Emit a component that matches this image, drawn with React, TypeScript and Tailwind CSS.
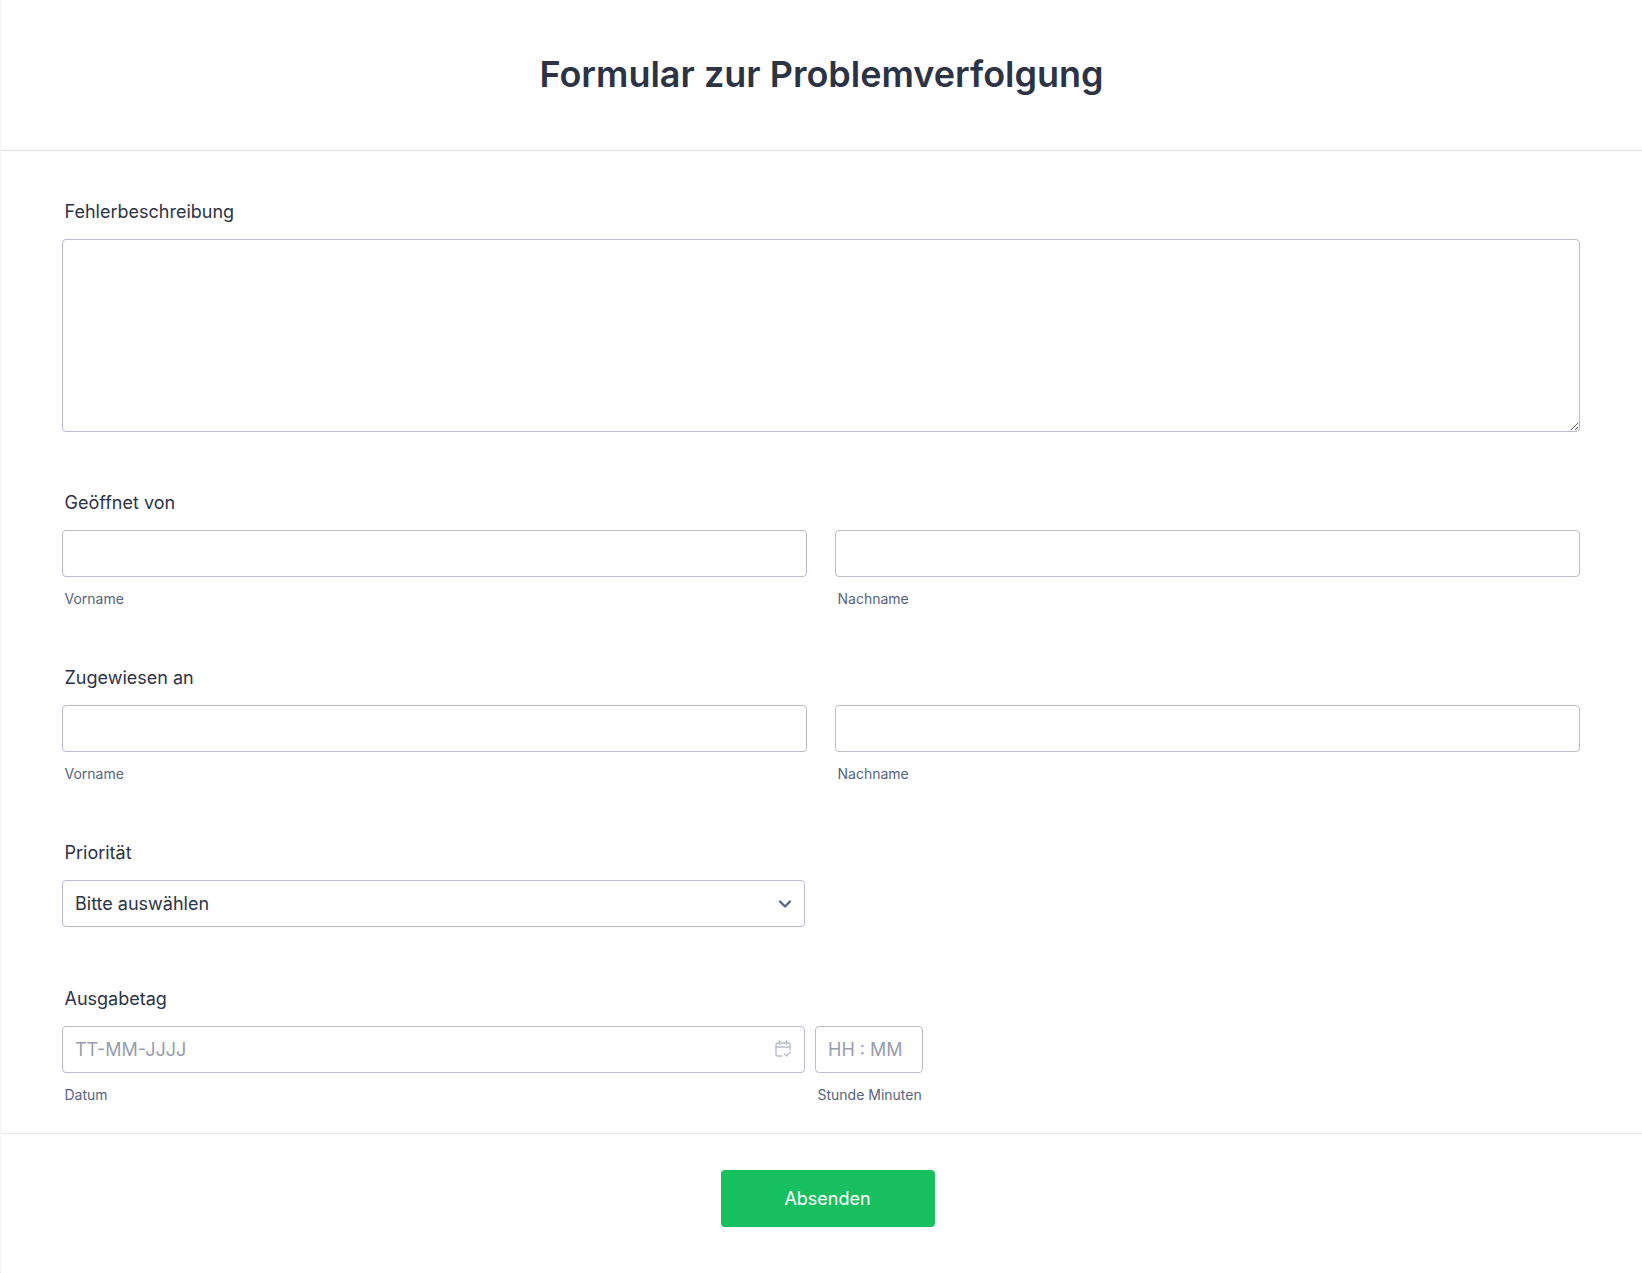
// Issue tracking form
import { ChevronDown } from 'lucide-react';

const inputClass =
  'block h-[47px] w-full rounded border border-[#b8bdc9] bg-white px-3 text-lg text-[#2c3345] outline-none placeholder:text-[#979dad]';

function FieldLabel({ children }: { children: string }) {
  return <label className="mb-[15px] block h-[24px] pl-[2.5px] text-lg leading-[24px] text-[#2c3345]">{children}</label>;
}

function SubLabel({ children }: { children: string }) {
  return <span className="mt-[13px] block pl-[2.5px] text-sm leading-[18px] text-[#57647e]">{children}</span>;
}

function NameField({ label }: { label: string }) {
  return (
    <div>
      <FieldLabel>{label}</FieldLabel>
      <div className="grid grid-cols-2 gap-[28px]">
        <div>
          <input className={inputClass} />
          <SubLabel>Vorname</SubLabel>
        </div>
        <div>
          <input className={inputClass} />
          <SubLabel>Nachname</SubLabel>
        </div>
      </div>
    </div>
  );
}

function CalendarIcon() {
  return (
    <svg width="18" height="18" viewBox="0 0 18 18" fill="none" stroke="#b8bdc9" strokeWidth="1.4" strokeLinecap="round" strokeLinejoin="round">
      <path d="M8 16H3.5A1.5 1.5 0 0 1 2 14.500V4.500A1.500 1.500 0 0 1 3.500 3h11A1.500 1.500 0 0 1 16 4.500V10" />
      <path d="M2 7h14M5.500 1v3.500M12.500 1v3.500" />
      <path d="M10.500 14l2 2 3.500-3.500" />
    </svg>
  );
}

export default function App() {
  return (
    <div className="min-h-[1273px] border-l border-dotted border-[#e8e9ef] bg-white font-['Inter',sans-serif] [font-optical-sizing:none]">
      <header className="flex h-[151px] items-center justify-center border-b border-[#dfe2e8] pb-[3px]">
        <h1 className="text-[36px] font-semibold leading-[44px] text-[#2c3345]">Formular zur Problemverfolgung</h1>
      </header>

      <main className="flex h-[983px] flex-col border-b border-[#e8e9ef] pt-[49px] pr-[62px] pl-[61px]">
        <div>
          <FieldLabel>Fehlerbeschreibung</FieldLabel>
          <textarea className="block h-[193px] w-full rounded border border-[#b8bdc9] bg-white px-3 py-2 text-lg outline-none" />
        </div>

        <div className="mt-[59px]">
          <NameField label="Geöffnet von" />
        </div>
        <div className="mt-[58px]">
          <NameField label="Zugewiesen an" />
        </div>

        <div className="mt-[58px] w-[743px]">
          <FieldLabel>Priorität</FieldLabel>
          <div className="relative">
            <select className={`${inputClass} appearance-none`}>
              <option>Bitte auswählen</option>
            </select>
            <ChevronDown className="absolute top-[14px] right-[10px] h-[20px] w-[20px] text-[#57647e]" strokeWidth={2.75} />
          </div>
        </div>

        <div className="mt-[60px] flex gap-[10px]">
          <div className="w-[743px]">
            <FieldLabel>Ausgabetag</FieldLabel>
            <div className="relative">
              <input className={inputClass} placeholder="TT-MM-JJJJ" />
              <span className="absolute top-[14px] right-[13px]">
                <CalendarIcon />
              </span>
            </div>
            <SubLabel>Datum</SubLabel>
          </div>
          <div className="w-[108px] pt-[39px]">
            <input className={inputClass} placeholder="HH : MM" />
            <span className="mt-[13px] block pl-[2.5px] text-sm leading-[18px] whitespace-nowrap text-[#57647e]">Stunde Minuten</span>
          </div>
        </div>
      </main>

      <footer className="flex justify-center pt-[36px] pl-[12px]">
        <button className="h-[57px] w-[214px] rounded bg-[#18bf5f] text-lg text-white">Absenden</button>
      </footer>
    </div>
  );
}
